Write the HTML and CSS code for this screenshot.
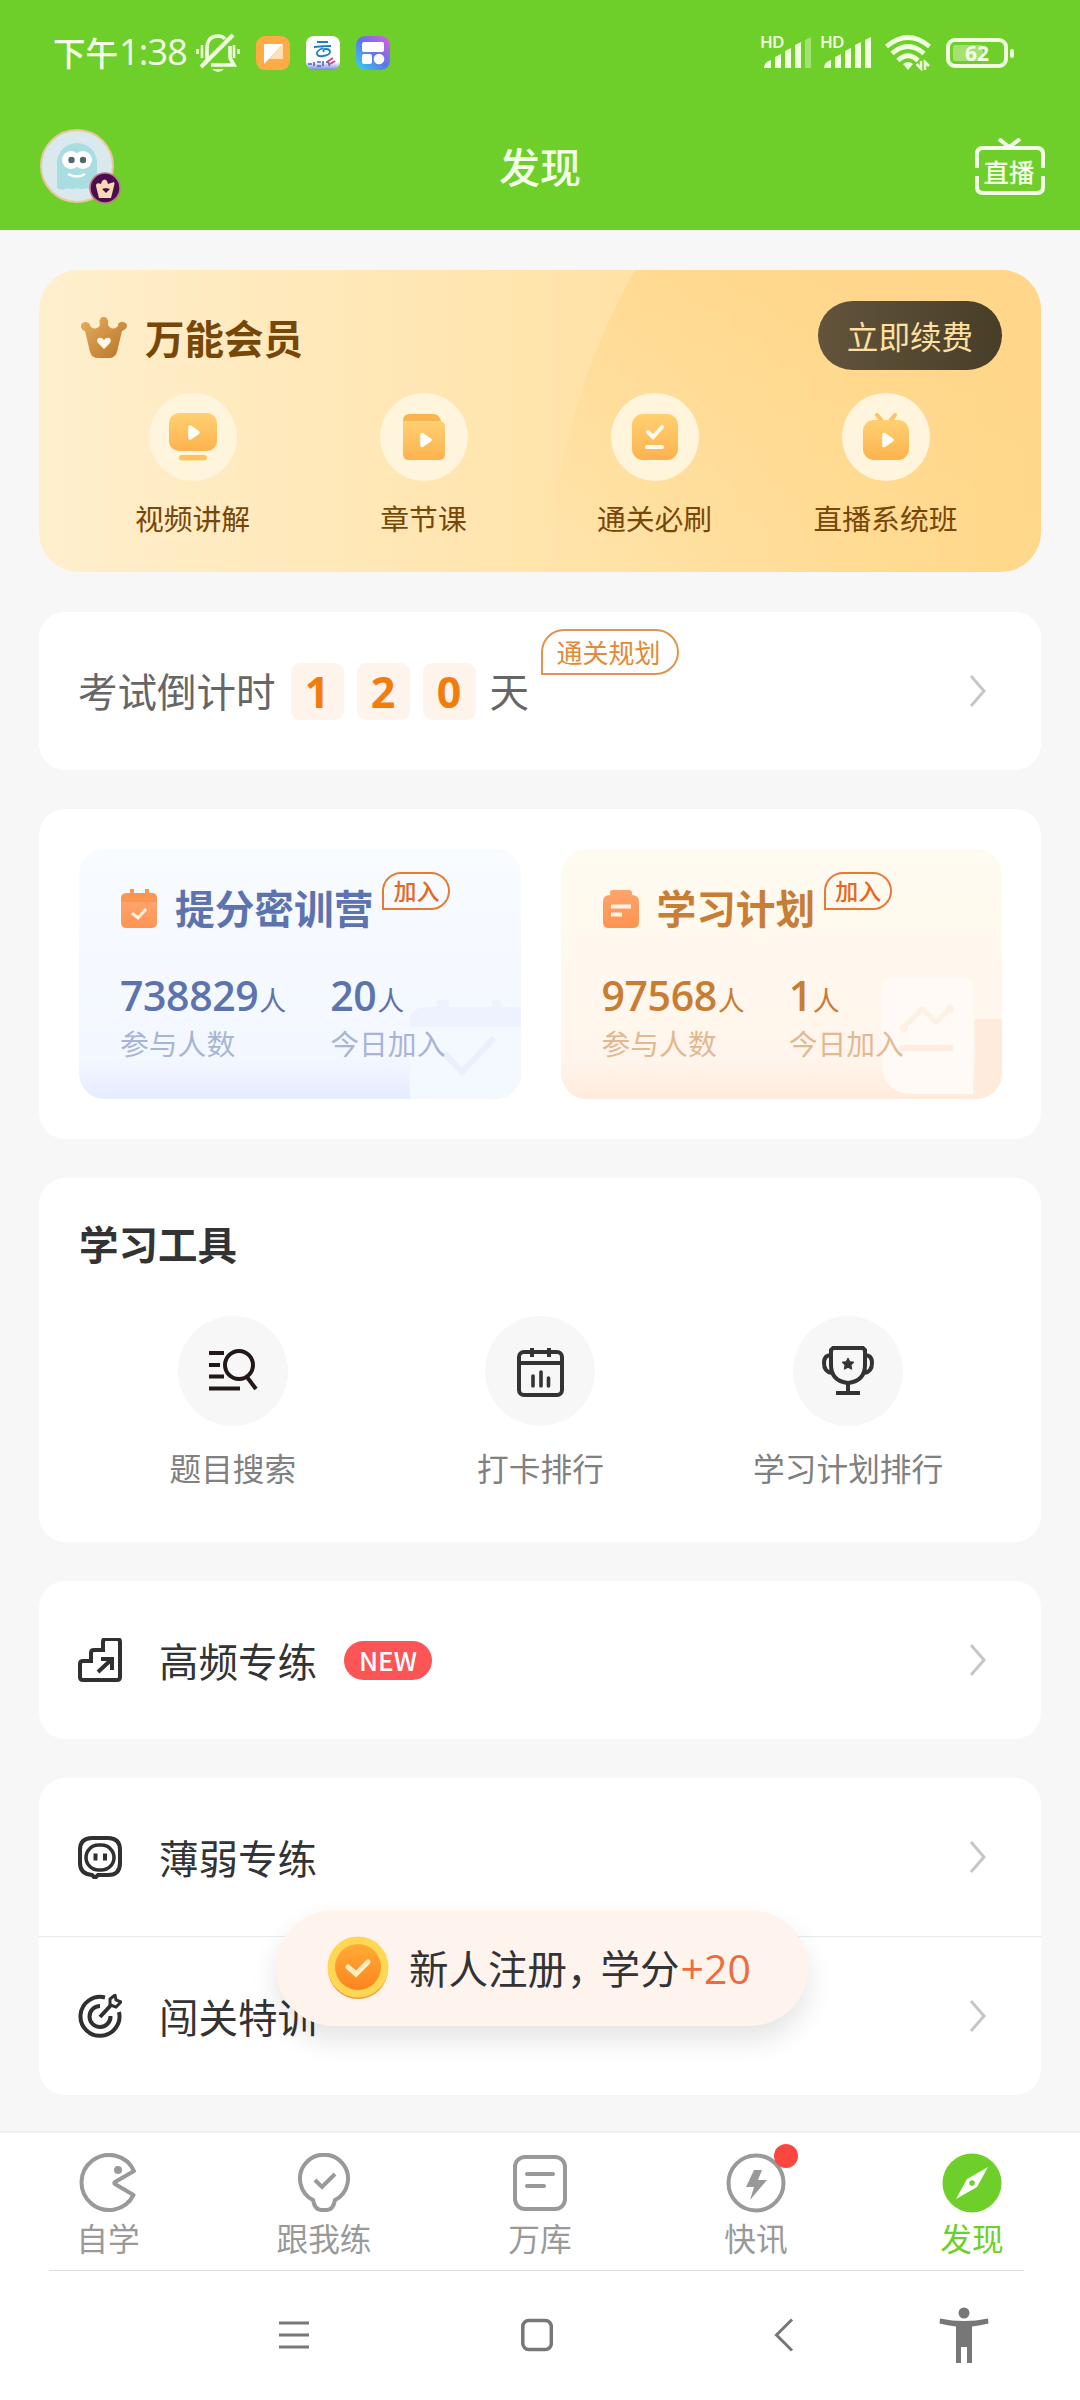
FILE: index.html
```html
<!DOCTYPE html>
<html lang="zh-CN">
<head>
<meta charset="utf-8">
<title>发现</title>
<link rel="stylesheet" href="styles.css">
</head>
<body>
<svg class="defs" width="0" height="0">
  <defs>
    <linearGradient id="gold" x1="0" y1="0" x2="0" y2="1"><stop offset="0" stop-color="#ffd071"/><stop offset="1" stop-color="#fdb24e"/></linearGradient>
    <linearGradient id="crown" x1="0" y1="0" x2="1" y2="1"><stop offset="0" stop-color="#e6ae62"/><stop offset="1" stop-color="#b87325"/></linearGradient>
    <linearGradient id="orange" x1="0" y1="0" x2="0" y2="1"><stop offset="0" stop-color="#ffa46b"/><stop offset="1" stop-color="#ff9350"/></linearGradient>
    <linearGradient id="coin" x1="0" y1="0" x2="0" y2="1"><stop offset="0" stop-color="#ffab35"/><stop offset="1" stop-color="#ff8420"/></linearGradient>
    <linearGradient id="app" x1="0" y1="1" x2="1" y2="0"><stop offset="0" stop-color="#35d7ee"/><stop offset=".5" stop-color="#5d75ee"/><stop offset="1" stop-color="#e35ce0"/></linearGradient>
    <linearGradient id="cloud" x1="0" y1="0" x2="0" y2="1"><stop offset=".76" stop-color="#fff"/><stop offset="1" stop-color="#7c86e0"/></linearGradient>
    <symbol id="chevron" viewBox="0 0 18 34"><path d="M2 2 15 17 2 32" fill="none" stroke="#c6c6c6" stroke-width="3"/></symbol>
  </defs>
</svg>
<header class="header">
  <div class="status">
    <div class="clock"><span>下午</span><b>1:38</b></div>
    <svg class="mute" viewBox="0 0 44 40" width="44" height="40"><g fill="none" stroke="#f0ffdf" stroke-width="3.6"><path d="M11 25V16C11 7 15 3 22 3q5 0 7 3M34 13v12l4 7H15"/><path d="M5 34 37 2" stroke-width="4"/><path d="M11 20v6L6 33" stroke-width="3"/><path d="M1.5 16v5M6 12v13M38 12v13M42.5 16v5" stroke-width="2.6"/></g><path d="M16 36h12q-6 6-12 0" fill="#f0ffdf"/></svg>
    <svg class="app" viewBox="0 0 34 34" width="34" height="34"><rect width="34" height="34" rx="9" fill="#ffab45"/><path d="M8 8h19L8 28z" fill="#fff"/><path d="M27 8v15H13z" fill="#ffe0b4"/></svg>
    <svg class="app" viewBox="0 0 34 34" width="34" height="34"><rect width="34" height="34" rx="8" fill="url(#cloud)"/><path d="M11 6h11M8 11q9-1 17-1M17 12q-7 3-6 6t6 2q7-1 7-4t-4-3-2 3" fill="none" stroke="#1781ce" stroke-width="1.8"/><path d="M2 28h4m2-2v4m3-4h4m-4 4h4m2-5v5m3-4q4 0 3 4" fill="none" stroke="#4665c9" stroke-width="1.600"/><path d="m21 26 6-4m-3 6 5-3" stroke="#d1477c" stroke-width="2"/></svg>
    <svg class="app" viewBox="0 0 34 34" width="34" height="34"><rect width="34" height="34" rx="9" fill="url(#app)"/><rect x="6" y="6" width="22" height="10" rx="2" fill="#fff"/><rect x="6" y="18" width="10" height="10" rx="2" fill="#fff"/><circle cx="23" cy="23" r="5.3" fill="#fff"/></svg>
    <div class="signals">
      <div class="signal"><span>HD</span><svg viewBox="0 0 48 32" width="48" height="32" fill="#f0ffdf"><path d="M0 31q0-6 7-8v8zM11 31V20l6-3v14zM21 31V14l6-3v20zM31 31V8l6-3v26z"/><path d="M41 31V3l6-3v31z" opacity=".4"/></svg></div>
      <div class="signal"><span>HD</span><svg viewBox="0 0 48 32" width="48" height="32" fill="#f0ffdf"><path d="M0 31q0-6 7-8v8zM11 31V20l6-3v14zM21 31V14l6-3v20zM31 31V8l6-3v26zM41 31V3l6-3v31z"/></svg></div>
      <svg class="wifi" viewBox="0 0 46 36" width="46" height="36"><g fill="none" stroke="#f0ffdf" stroke-width="4.8"><path d="M1.500 11.500Q23-6.500 44.500 11.500"/><path d="M7 18.500Q23 4.500 39 18.500"/><path d="M13 25.500Q23 16 33 25.500"/></g><path d="M18 29q5-4 10 0l-5 6z" fill="#f0ffdf"/><path d="M31.500 29l4.500 4.500V26M40 35v-8l4 4" fill="none" stroke="#f0ffdf" stroke-width="2.500"/></svg>
      <div class="battery"><i></i><b>62</b></div>
    </div>
  </div>
  <div class="topbar">
    <div class="avatar">
      <svg viewBox="0 0 82 76" width="82" height="76"><circle cx="37" cy="37" r="36" fill="#d9e9ee" stroke="#e8c6a0" stroke-width="2"/><path d="M17 59V34a20 20 0 0 1 40 0v25q-5 3-10 0-5 2-10 0-5 2-10 0-5 3-10 0" fill="#aadde2"/><circle cx="31" cy="31" r="9" fill="#fff"/><circle cx="43" cy="31" r="9" fill="#fff"/><circle cx="31.500" cy="31" r="3.200" fill="#52686b"/><circle cx="43" cy="31" r="3.200" fill="#52686b"/><path d="M28 45q9 5 17 0" fill="none" stroke="#fff" stroke-width="2.500"/><circle cx="65" cy="59" r="15" fill="#4b0d4f" stroke="#bd7c86" stroke-width="1.500"/><path d="m59 69-3-12q0-4 5-2l1-3q3-3 5 0l1 3 6-2q1 1 0 4l-3 12z" fill="#f9d8b8"/><path d="m62 60 4 4 4-4-4-1z" fill="#4b0d4f"/></svg>
    </div>
    <h1>发现</h1>
    <div class="live"><svg viewBox="0 0 70 58" width="70" height="58" fill="none" stroke="#f4ffe9" stroke-width="4"><path d="m24 1 10 8L45 1"/><path d="M2 30V16q0-6 6-6h54q6 0 6 6v14M2 38v11q0 6 6 6h54q6 0 6-6V38"/></svg><span>直播</span></div>
  </div>
</header>

<main class="main">
  <section class="vip">
    <svg class="shine" viewBox="0 0 1002 302" preserveAspectRatio="none"><defs><linearGradient id="sh" x1="0" y1="1" x2=".6" y2="0"><stop offset=".1" stop-color="#ffd88a" stop-opacity="0"/><stop offset="1" stop-color="#ffd68a" stop-opacity=".9"/></linearGradient></defs><path d="M596 0Q540 100 520 210Q510 255 508 302H1002V0z" fill="url(#sh)"/></svg>
    <div class="vip-head">
      <svg class="vip-crown" viewBox="0 0 46 42" width="46" height="42"><path d="m9 35-5-21q-5-2-4-6c2-5 10-3 9 1 4 4 8 3 10-1-3-11 10-11 8 0 2 4 6 5 10 1-1-5 7-6 9-1q0 4-5 6l-5 21q-2 6-8 6H17q-6 0-8-6z" fill="url(#crown)"/><path d="m23 32-6-6c-3-5 3-7 6-3 3-4 9-2 6 3z" fill="#fff7ea"/></svg>
      <h2>万能会员</h2>
      <button class="renew">立即续费</button>
    </div>
    <div class="vip-grid">
      <div class="vip-item"><span class="disc"><svg viewBox="0 0 48 48" width="48" height="48"><rect width="48" height="38" rx="10" fill="url(#gold)"/><rect x="10" y="42" width="28" height="5.500" rx="2.700" fill="#ffc263"/><path d="m21 14 8 5.500-8 5.500z" fill="#fff" stroke="#fff" stroke-width="3.500" stroke-linejoin="round"/></svg></span><p>视频讲解</p></div>
      <div class="vip-item"><span class="disc"><svg viewBox="0 0 42 46" width="42" height="46"><path d="M0 7q0-7 7-7h23q7 0 8 8H0z" fill="#f9b44d"/><path d="M0 7h37q5 1 5 6v27q0 6-6 6H6q-6 0-6-6z" fill="url(#gold)"/><path d="m19 20.500 8 5.500-8 5.500z" fill="#fff" stroke="#fff" stroke-width="3.500" stroke-linejoin="round"/></svg></span><p>章节课</p></div>
      <div class="vip-item"><span class="disc"><svg viewBox="0 0 46 46" width="46" height="46"><rect width="46" height="46" rx="11" fill="url(#gold)"/><path d="m16 18 5 5 9-10M15 33h15" fill="none" stroke="#fffaf0" stroke-width="4" stroke-linecap="round"/></svg></span><p>通关必刷</p></div>
      <div class="vip-item"><span class="disc"><svg viewBox="0 0 46 48" width="46" height="48"><path d="m14 2 5 6m13-6-5 6" stroke="#fdc364" stroke-width="4" stroke-linecap="round"/><rect y="7" width="46" height="40" rx="11" fill="url(#gold)"/><path d="m21 21.500 8 5.500-8 5.500z" fill="#fff" stroke="#fff" stroke-width="3.500" stroke-linejoin="round"/></svg></span><p>直播系统班</p></div>
    </div>
  </section>

  <section class="card countdown">
    <span>考试倒计时</span>
    <div class="days"><b>1</b><b>2</b><b>0</b></div>
    <span>天</span>
    <em class="tag tag-plan">通关规划</em>
    <svg class="chev" width="18" height="34"><use href="#chevron"/></svg>
  </section>

  <section class="card camps">
    <article class="camp camp-blue">
      <svg class="mark" viewBox="0 0 112 102" width="112" height="102"><path d="M1 30V22Q2 12 14 10H28V3h12v7h43V3h9v7h20v20z" fill="#edf2fe"/><path d="M1 30h111v72H1z" fill="#f4f8ff"/><path d="m35 56 18 19 32-34" fill="none" stroke="#eaeffc" stroke-width="6"/></svg>
      <div class="camp-head"><svg viewBox="0 0 36 40" width="36" height="40"><path d="M0 13V9q0-5 6-5h3V0h4v4h11V0h4v4h3q5 0 5 5v4z" fill="#fa9552"/><path d="M0 13h36v20q0 6-6 6H6q-6 0-6-6z" fill="url(#orange)"/><path d="m11 24 6 5 8-9" fill="none" stroke="#fff3df" stroke-width="3"/></svg><h3>提分密训营</h3><em class="tag">加入</em></div>
      <div class="stats"><div><p class="num"><b>738829</b>人</p><p class="cap">参与人数</p></div><div><p class="num"><b>20</b>人</p><p class="cap">今日加入</p></div></div>
    </article>
    <article class="camp camp-gold">
      <svg class="mark" viewBox="0 0 120 121" width="120" height="121"><path d="M0 8q0-8 8-8h75q8 0 8 8v108H32Q0 116 0 84z" fill="#fffaf5"/><path d="M93 41h27v80H101q-8-3-8-14z" fill="#feebdc"/><path d="m22 49 18-18 14 13 14-13" fill="none" stroke="#fdf0e4" stroke-width="5"/><circle cx="22" cy="50" r="4" fill="#fdf0e4"/><circle cx="68" cy="31" r="4" fill="#fdf0e4"/><path d="M18 70h53" stroke="#fdeee1" stroke-width="6"/></svg>
      <div class="camp-head"><svg viewBox="0 0 36 40" width="36" height="40"><path d="M0 13q0-7 7-7V4q0-3 3-3h16q3 0 3 3v2q7 0 7 7v20q0 6-6 6H6q-6 0-6-6z" fill="url(#orange)"/><path d="M8 17.500h20M8 25.500h11" stroke="#fff3e4" stroke-width="4"/></svg><h3>学习计划</h3><em class="tag">加入</em></div>
      <div class="stats"><div><p class="num"><b>97568</b>人</p><p class="cap">参与人数</p></div><div><p class="num"><b>1</b>人</p><p class="cap">今日加入</p></div></div>
    </article>
  </section>

  <section class="card tools">
    <h2>学习工具</h2>
    <div class="tool-grid">
      <div class="tool"><span class="ring"><svg viewBox="0 0 52 52" width="52" height="52" fill="none" stroke="#211817" stroke-width="4"><path d="M2 8h15M2 20h11M2 31.500h15M2 43.500h31"/><circle cx="32" cy="20" r="14"/><path d="m40 32 9 12"/></svg></span><p>题目搜索</p></div>
      <div class="tool"><span class="ring"><svg viewBox="0 0 52 52" width="52" height="52" fill="none" stroke="#333" stroke-width="4"><rect x="5" y="7" width="43" height="43" rx="5"/><path d="M5 18h43M18 3v9M35 3v9"/><path d="M19 31v10M27 27v14M34.500 33v8" stroke-width="3.600" stroke-linecap="round"/></svg></span><p>打卡排行</p></div>
      <div class="tool"><span class="ring"><svg viewBox="0 0 54 52" width="54" height="52" fill="none" stroke="#333" stroke-width="4"><path d="M12 3h30l2 2v15q0 16-17 18-17-2-17-18V5zM10 10q-7 0-7 8 0 9 8 10M44 10q7 0 7 8 0 9-8 10M27 38v9M15 48h24"/><path d="m27 13 1.800 3.700 4.200.5-3 3 .7 4.100-3.700-2-3.700 2 .7-4.100-3-3 4.200-.5z" fill="#333" stroke-width="1"/></svg></span><p>学习计划排行</p></div>
    </div>
  </section>

  <section class="card list">
    <div class="row"><svg class="ico" viewBox="0 0 44 44" width="44" height="44" fill="none" stroke="#303030" stroke-width="4"><path d="M2 40V26q0-3 3-3h8v-8q0-3 3-3h9V4q0-3 3-3h11q3 0 3 3v35q0 3-3 3H5q-3 0-3-3z"/><path d="m20 34 14-13M23 21h11v11"/></svg><span>高频专练</span><i class="new">NEW</i><svg class="chev" width="18" height="34"><use href="#chevron"/></svg></div>
  </section>

  <section class="card list">
    <div class="row"><svg class="ico" viewBox="0 0 44 44" width="44" height="44" fill="none" stroke="#303030" stroke-width="4"><path d="M14 3h16q12 0 12 12v13q0 12-12 12H20l-3 3-3-3Q2 39 2 28V15Q2 3 14 3z"/><rect x="8" y="10" width="28" height="25" rx="12.500" stroke-width="3.500"/><path d="M17.500 18.500v7M27 18.500v7"/></svg><span>薄弱专练</span><svg class="chev" width="18" height="34"><use href="#chevron"/></svg></div>
    <div class="row"><svg class="ico" viewBox="0 0 44 44" width="44" height="44" fill="none" stroke="#303030" stroke-width="4"><path d="M27 3.500A19.500 19.500 0 1 0 41 18"/><path d="M22 12A10.500 10.500 0 1 0 32.500 22M22 23l12-13"/><path d="M32 11V5l5-4 1 5 5 2-5 5z" stroke-width="3"/></svg><span>闯关特训</span><svg class="chev" width="18" height="34"><use href="#chevron"/></svg></div>
  </section>
</main>

<div class="toast"><svg viewBox="0 0 62 64" width="62" height="64"><circle cx="31" cy="33" r="30" fill="#f29b31"/><circle cx="31" cy="31" r="30.500" fill="#ffd754"/><circle cx="31" cy="31" r="23" fill="url(#coin)"/><path d="m21 31 8 7 12-12" fill="none" stroke="#ffedbd" stroke-width="5" stroke-linecap="round"/></svg><span>新人注册<i class="comma">，</i>学分</span><b>+20</b></div>

<footer class="footer">
  <nav class="tabs">
    <a class="tab"><svg viewBox="0 0 60 60" width="60" height="60" fill="none" stroke="#999" stroke-width="4" stroke-linejoin="round"><path d="M56 18A27.500 27.500 0 1 0 55.500 42L37 31q-1.500-1 0-2z"/><circle cx="40" cy="17" r="4" fill="#999" stroke="none"/></svg><span>自学</span></a>
    <a class="tab"><svg viewBox="0 0 60 60" width="60" height="60" fill="none" stroke="#999" stroke-width="4"><path d="M19 47A24 24 0 1 1 41 47Q39 57 33 57H27Q21 57 19 47z"/><path d="m21 27 7 7 13-13"/></svg><span>跟我练</span></a>
    <a class="tab"><svg viewBox="0 0 60 60" width="60" height="60" fill="none" stroke="#999" stroke-width="4"><rect x="5" y="4" width="50" height="52" rx="10"/><path d="M17 21h26M17 33h17" stroke-linecap="round"/></svg><span>万库</span></a>
    <a class="tab"><svg viewBox="0 0 60 60" width="60" height="60" fill="none" stroke="#999" stroke-width="4"><circle cx="30" cy="30" r="27.500"/><path d="M28 17h8l-4 10h9L24 47l4-13h-8z" fill="#999" stroke="none"/></svg><i class="dot"></i><span>快讯</span></a>
    <a class="tab active"><svg viewBox="0 0 60 60" width="60" height="60"><circle cx="30" cy="30" r="29.500" fill="#6fcf2a"/><path d="M46 14 35 34 14 46 25 26z" fill="#fff"/><circle cx="30" cy="30" r="2.800" fill="#6fcf2a"/></svg><span>发现</span></a>
  </nav>
  <div class="sysnav">
    <svg viewBox="0 0 30 30" width="30" height="30" stroke="#777" stroke-width="3"><path d="M0 3h30M0 15h30M0 27h30"/></svg>
    <svg viewBox="0 0 32 34" width="32" height="34"><rect x="1.800" y="2.500" width="28.500" height="29" rx="6" fill="none" stroke="#777" stroke-width="3.500"/></svg>
    <svg viewBox="0 0 20 34" width="20" height="34"><path d="M18 1.500 2.500 17 18 32.500" fill="none" stroke="#777" stroke-width="3"/></svg>
    <svg viewBox="0 0 50 58" width="50" height="58" fill="#777"><circle cx="25" cy="7" r="5.500"/><path d="M1 12.500q24 5 48 0l.5 5q-8 2-16.500 3V57h-5V41h-6v16h-5V20.500q-8.500-1-16.500-3z"/></svg>
  </div>
</footer>
</body>
</html>
```
FILE: styles.css
```css
* { box-sizing: border-box; margin: 0; padding: 0; }
body {
  width: 1080px;
  height: 2400px;
  overflow: hidden;
  position: relative;
  display: flex;
  flex-direction: column;
  background: #f7f7f7;
  color: #333;
  font-family: "Noto Sans CJK SC", sans-serif;
  font-size: 39.5px;
  line-height: 1;
}
svg { display: block; flex: none; }
.defs { position: absolute; }
h1, h2, h3, em, i { font-style: normal; }
span, p, h1, h2, h3 { white-space: nowrap; }

/* header */
.header { height: 230px; background: #6fcf2a; color: #f4ffe9; }
.status { height: 106px; display: flex; align-items: center; padding: 0 61px 0 53px; }
.clock { width: 143px; display: flex; align-items: center; font-size: 32.5px; padding-bottom: 2px; }
.clock span { font-weight: 500; }
.clock b { font: 500 36px/40px "Open Sans", sans-serif; letter-spacing: -.8px; margin-left: 1px; }
.app { margin-left: 16px; }
.signals { margin-left: auto; display: flex; align-items: center; }
.signal { position: relative; width: 60px; padding-left: 2px; }
.signal span { position: absolute; left: -2px; top: -4px; font: 600 17px/17px "Open Sans", sans-serif; letter-spacing: -.8px; }
.wifi { margin-left: 3px; margin-right: 15px; }
.battery { position: relative; width: 62px; height: 30px; margin-right: 11px; border: 4px solid #f0ffdf; border-radius: 9px; display: flex; align-items: center; justify-content: center; }
.battery::after { content: ""; position: absolute; right: -10px; top: 7px; width: 4px; height: 9px; border-radius: 2px; background: #f0ffdf; }
.battery i { position: absolute; left: 3px; top: 3px; bottom: 3px; width: 30px; background: #a5e070; border-radius: 2px; }
.battery b { position: relative; font: 700 21px/20px "Open Sans", sans-serif; }
.topbar { display: grid; grid-template-columns: 1fr auto 1fr; align-items: center; height: 124px; padding: 0 35px; }
.avatar { padding: 0 0 2px 5px; }
.topbar h1 { font-size: 41px; font-weight: 500; padding-bottom: 5px; }
.live { position: relative; justify-self: end; width: 70px; height: 60px; }
.live span { position: absolute; left: 0; right: 2px; top: 20px; text-align: center; font-size: 25.5px; font-weight: 500; }

/* content */
.main { padding: 40px 39px 0; display: flex; flex-direction: column; gap: 39px; }
.vip { position: relative; height: 302px; margin-bottom: 1px; padding: 31px 39px 0; border-radius: 40px; overflow: hidden; background: linear-gradient(90deg, #ffefcd 0%, #ffe2a6 58%, #ffd88b 100%); color: #774709; }
.shine { position: absolute; inset: 0; width: 100%; height: 100%; }
.vip-head { position: relative; display: flex; align-items: center; height: 69px; }
.vip-crown { margin-left: 3px; margin-top: 5px; }
.vip-head h2 { margin-left: 18px; margin-top: 3px; font-size: 39.5px; font-weight: 700; }
.renew { margin-left: auto; width: 184px; height: 69px; border: 0; border-radius: 35px; background: linear-gradient(90deg, #63543c, #473e27); color: #ffe0a0; font: 400 31.6px/67px "Noto Sans CJK SC", sans-serif; }
.vip-grid { position: relative; left: -1px; display: grid; grid-template-columns: repeat(4, 1fr); margin-top: 23px; }
.vip-item { display: flex; flex-direction: column; align-items: center; }
.disc { width: 88px; height: 88px; border-radius: 50%; background: #fff4dc; display: flex; align-items: center; justify-content: center; }
.vip-item p { margin-top: 23px; font-size: 28.8px; }
.card { background: #fff; border-radius: 26px; }
.chev { margin-left: auto; margin-right: 15px; margin-top: -1px; }
.countdown { height: 158px; padding: 0 39px; display: flex; align-items: center; color: #666; }
.countdown > span { padding-bottom: 3px; }
.days { display: flex; gap: 13px; margin: 0 14px 0 15px; }
.days b { width: 53px; height: 57px; border-radius: 9px; background: #fff4ec; color: #f07d0e; text-align: center; font: 700 43px/57px "Open Sans", sans-serif; }
.tag { border: 2px solid #e87a35; border-radius: 20px 20px 20px 0; color: #e8661d; font-weight: 500; text-align: center; }
.tag-plan { align-self: flex-start; margin: 17px 0 0 12px; padding-right: 3px; width: 138px; height: 46px; border-color: #e0954c; border-radius: 26px 26px 26px 0; color: #e28a37; font-size: 26px; line-height: 41px; font-weight: 400; }
.camps { height: 330px; padding: 40px 39px 40px 40px; display: grid; grid-template-columns: 1fr 1fr; gap: 40px; }
.camp { position: relative; height: 250px; padding: 23px 0 0 41px; border-radius: 26px; overflow: hidden; }
.camp-blue { color: #5d73ae; background: linear-gradient(#f8fbff 0, #f3f7ff 84%, #e5ecff 100%); }
.camp-gold { color: #c77d33; background: linear-gradient(#fffbf0 0, #fff5ec 84%, #ffebdc 100%); }
.mark { position: absolute; right: 0; bottom: 0; }
.camp-head { position: relative; display: flex; height: 76px; padding-left: 1px; }
.camp-head svg { margin-top: 17px; }
.camp-head h3 { margin: 15px 0 0 18px; font-size: 39.7px; font-weight: 700; line-height: 40px; }
.camp-head .tag { margin-left: 9px; width: 68px; height: 38px; font-size: 23px; line-height: 32px; }
.stats { position: relative; display: flex; gap: 44px; }
.num { height: 54px; font-size: 27px; line-height: 54px; margin-top: 20px; }
.num b { font: 600 41px/54px "Open Sans", sans-serif; letter-spacing: -.4px; margin-right: 1px; }
.cap { margin-top: 4px; font-size: 28.8px; line-height: 34px; opacity: .5; }
.tools { height: 364px; padding: 45px 39px 0 40px; }
.tools h2 { font-size: 39.5px; font-weight: 700; line-height: 40px; }
.tool-grid { display: grid; grid-template-columns: repeat(3, 1fr); margin-top: 53px; }
.tool { display: flex; flex-direction: column; align-items: center; }
.ring { width: 110px; height: 110px; border-radius: 50%; background: #f7f7f7; display: flex; align-items: center; justify-content: center; }
.tool p { margin-top: 26px; font-size: 31.7px; color: #808080; }
.row { height: 158px; padding: 0 39px; display: flex; align-items: center; }
.row + .row { height: 159px; border-top: 1px solid #e9e9e9; }
.row > span { margin-left: 37px; padding-bottom: 1px; line-height: 40px; }
.new { margin-left: 27px; width: 88px; height: 39px; border-radius: 20px; background: #fd5455; color: #fff; text-align: center; font: 500 26px/38px "Noto Sans CJK SC", sans-serif; }

/* floating reward notice */
.toast { position: absolute; left: 276px; top: 1910px; width: 532px; height: 116px; padding-left: 51px; border-radius: 58px; background: #fff4ed; display: flex; align-items: center; box-shadow: 0 14px 28px rgba(0, 0, 0, .11); }
.toast span { margin-left: 20px; padding-bottom: 3px; }
.comma { letter-spacing: -6px; }
.toast b { margin-left: 1px; color: #f06b3c; font: 500 41px/40px "Open Sans", sans-serif; }

/* bottom bars */
.footer { margin-top: auto; height: 269px; background: #fff; border-top: 2px solid #efefef; }
.tabs { display: grid; grid-template-columns: repeat(5, 216px); height: 137px; padding-top: 20px; }
.tab { position: relative; display: flex; flex-direction: column; align-items: center; color: #999; }
.tab span { margin-top: 9px; font-size: 31.7px; }
.tab.active { color: #6fcf2a; }
.dot { position: absolute; left: 126px; top: -9px; width: 24px; height: 24px; border-radius: 50%; background: #fc4640; }
.sysnav { margin: 0 56px 0 49px; height: 129px; padding-left: 230px; border-top: 1px solid #dedede; display: flex; align-items: center; }
.sysnav svg:nth-child(2) { margin-left: 212px; }
.sysnav svg:nth-child(3) { margin-left: 221px; }
.sysnav svg:nth-child(4) { margin-left: 145px; }
```
